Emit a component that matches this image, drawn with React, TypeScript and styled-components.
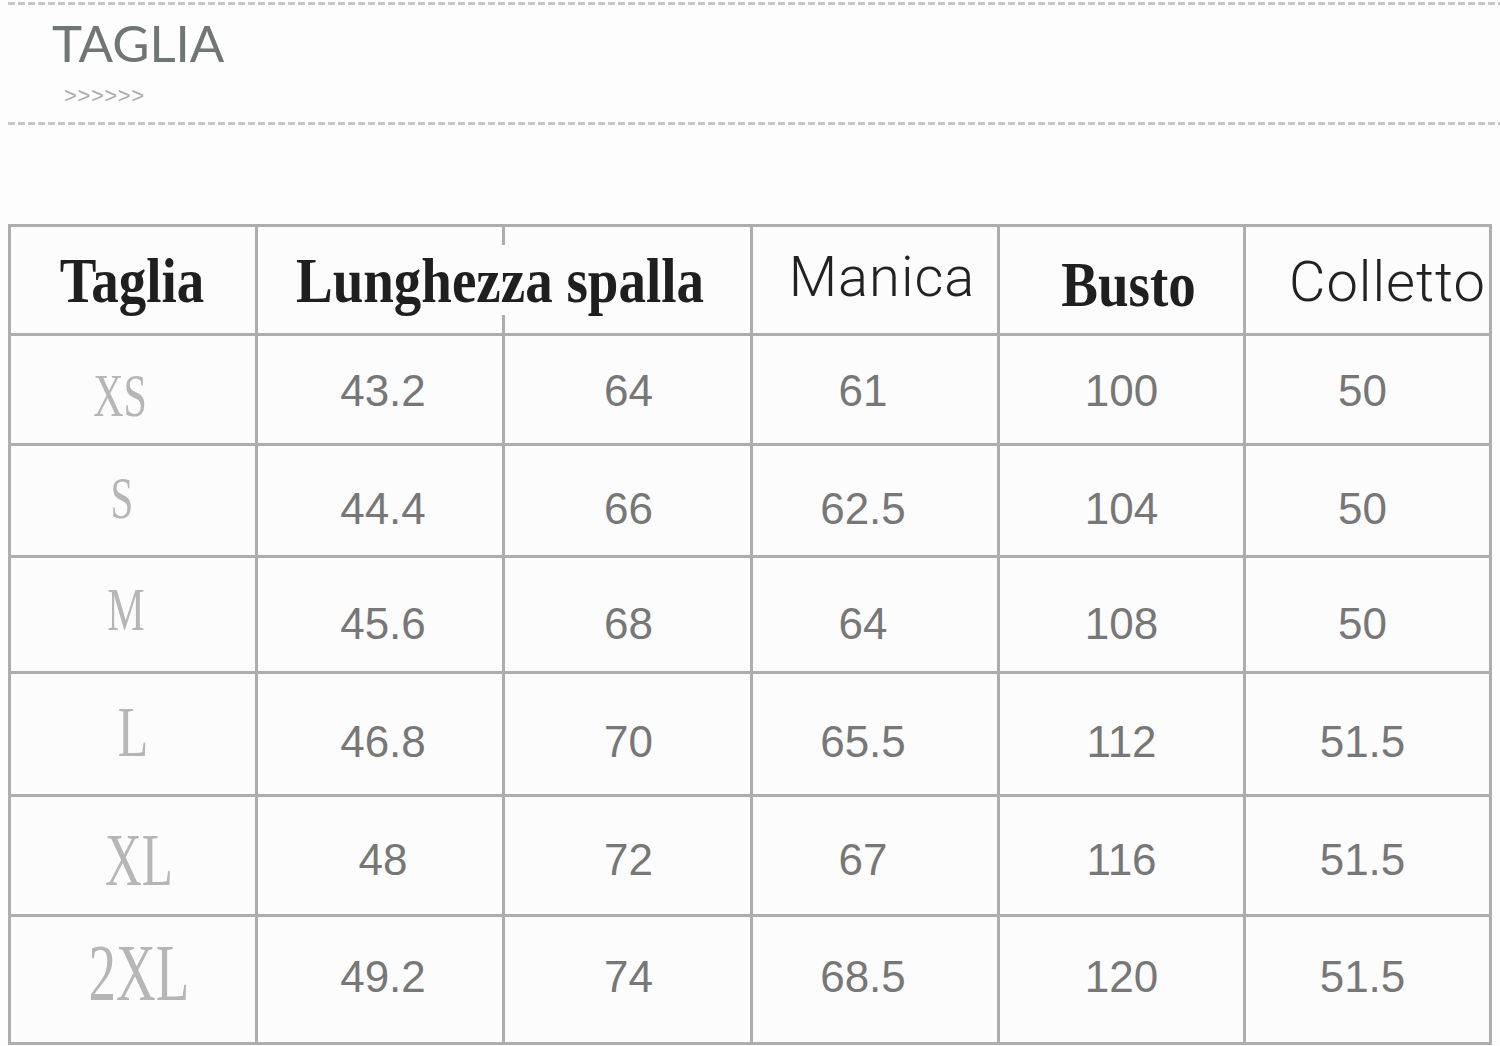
import React from 'react';
import styled, { createGlobalStyle } from 'styled-components';

const GlobalStyle = createGlobalStyle`
  html, body {
    margin: 0;
    padding: 0;
    background: #fdfdfd;
  }
`;

const Page = styled.div`
  width: 1500px;
  height: 1046px;
  overflow: hidden;
  background: #fdfdfd;
  display: flex;
  flex-direction: column;
`;

const DashedRule = styled.div`
  margin-left: 8px;
  height: 3px;
  background: repeating-linear-gradient(
    90deg,
    #c6c6c6 0 7px,
    transparent 7px 10px
  );
`;

const TitleBlock = styled.div`
  display: flex;
  flex-direction: column;
  padding-left: 52px;
  padding-top: 12px;
  height: 117px;
  box-sizing: border-box;
`;

const Title = styled.div`
  font-family: 'Lato', 'DejaVu Sans', sans-serif;
  font-weight: 400;
  font-size: 51px;
  line-height: 52px;
  letter-spacing: 0;
  color: #6e7773;
`;

const Chevrons = styled.div`
  margin-top: 16px;
  padding-left: 12px;
  font-family: 'Liberation Sans', sans-serif;
  font-size: 22px;
  line-height: 22px;
  letter-spacing: 0.6px;
  color: #a9a9a9;
`;

const Table = styled.div`
  margin-top: 99px;
  margin-left: 8px;
  width: 1484px;
  display: grid;
  grid-template-columns: 244px 244px 245px 244px 243px 243px;
  grid-template-rows: 106px 107px 109px 113px 120px 117px 125px;
  gap: 3px;
  padding: 3px;
  background: #adadad;
  box-sizing: border-box;
`;

const Cell = styled.div<{ $dx?: number; $dy?: number; $span?: number }>`
  position: relative;
  background: #fcfcfc;
  display: flex;
  align-items: center;
  justify-content: center;
  grid-column: span ${({ $span }) => $span ?? 1};
  padding-left: ${({ $dx = 0 }) => Math.max(0, $dx * 2)}px;
  padding-right: ${({ $dx = 0 }) => Math.max(0, -$dx * 2)}px;
  padding-top: ${({ $dy = 0 }) => Math.max(0, $dy * 2)}px;
  padding-bottom: ${({ $dy = 0 }) => Math.max(0, -$dy * 2)}px;
  overflow: hidden;
`;

const SplitCell = styled(Cell)`
  &::before,
  &::after {
    content: '';
    position: absolute;
    left: 244px;
    width: 3px;
    background: #adadad;
  }
  &::before {
    top: 0;
    height: 18px;
  }
  &::after {
    bottom: 0;
    height: 18px;
  }
`;

const SerifHead = styled.span`
  display: inline-block;
  font-family: 'Liberation Serif', serif;
  font-weight: 700;
  font-size: 55px;
  line-height: 1;
  color: #1f1f1f;
  transform: scaleY(1.15);
`;

const SansHead = styled.span`
  font-family: 'Roboto', 'Liberation Sans', sans-serif;
  font-weight: 300;
  font-size: 56px;
  line-height: 1;
  letter-spacing: 1px;
  color: #222;
`;

const SizeLabel = styled.span<{ $size: number }>`
  display: inline-block;
  font-family: 'Liberation Serif', serif;
  font-weight: 400;
  font-size: ${({ $size }) => $size}px;
  line-height: 1;
  color: #b6b6b6;
  transform: scaleY(1.45);
`;

const Value = styled.span`
  font-family: 'Liberation Sans', sans-serif;
  font-size: 44px;
  line-height: 1;
  color: #777;
`;

type Row = {
  size: string;
  fontSize: number;
  dx: number;
  dy: number;
  vdy: number;
  values: string[];
};

const rows: Row[] = [
  { size: 'XS', fontSize: 42, dx: -13, dy: 6, vdy: 1, values: ['43.2', '64', '61', '100', '50'] },
  { size: 'S', fontSize: 41, dx: -11, dy: -2, vdy: 8, values: ['44.4', '66', '62.5', '104', '50'] },
  { size: 'M', fontSize: 42, dx: -7, dy: -5, vdy: 9, values: ['45.6', '68', '64', '108', '50'] },
  { size: 'L', fontSize: 50, dx: 0, dy: -3, vdy: 8, values: ['46.8', '70', '65.5', '112', '51.5'] },
  { size: 'XL', fontSize: 51, dx: 6, dy: 6, vdy: 4, values: ['48', '72', '67', '116', '51.5'] },
  { size: '2XL', fontSize: 55, dx: 6, dy: -6, vdy: -3, values: ['49.2', '74', '68.5', '120', '51.5'] },
];

// horizontal nudge of the numbers, per column
const valueDx = [3, 1, -12, 0, -5];

const App: React.FC = () => {
  return (
    <Page>
      <GlobalStyle />
      <DashedRule style={{ marginTop: 2 }} />
      <TitleBlock>
        <Title>TAGLIA</Title>
        <Chevrons>&gt;&gt;&gt;&gt;&gt;&gt;</Chevrons>
      </TitleBlock>
      <DashedRule />

      <Table>
        <Cell $dx={-1}>
          <SerifHead>Taglia</SerifHead>
        </Cell>
        <SplitCell $span={2} $dx={-4}>
          <SerifHead>Lunghezza spalla</SerifHead>
        </SplitCell>
        <Cell $dx={7} $dy={-3}>
          <SansHead>Manica</SansHead>
        </Cell>
        <Cell $dx={7} $dy={4}>
          <SerifHead>Busto</SerifHead>
        </Cell>
        <Cell $dx={20} $dy={2}>
          <SansHead>Colletto</SansHead>
        </Cell>

        {rows.map((row) => (
          <React.Fragment key={row.size}>
            <Cell $dx={row.dx} $dy={row.dy}>
              <SizeLabel $size={row.fontSize}>{row.size}</SizeLabel>
            </Cell>
            {row.values.map((v, i) => (
              <Cell key={i} $dx={valueDx[i]} $dy={row.vdy}>
                <Value>{v}</Value>
              </Cell>
            ))}
          </React.Fragment>
        ))}
      </Table>
    </Page>
  );
};

export default App;
